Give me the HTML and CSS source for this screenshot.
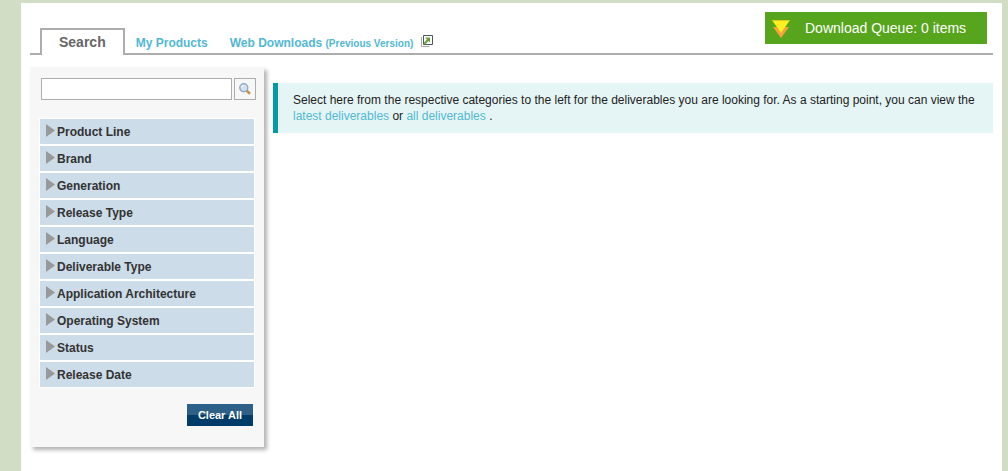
FILE: index.html
```html
<!DOCTYPE html>
<html lang="en">
<head>
<meta charset="utf-8">
<title>Search deliverables</title>
<link rel="stylesheet" href="styles.css">
</head>
<body>
<div class="page">
  <header class="header">
    <nav class="tabs">
      <a class="tab tab-active" href="#">Search</a>
      <a class="tab" href="#">My Products</a>
      <a class="tab" href="#">Web Downloads <small class="tab-note">(Previous Version)</small>
        <svg class="external" width="12" height="12" viewBox="0 0 12 12" aria-hidden="true">
          <path d="M.5 2v9.500h8" fill="none" stroke="#a3a9ad"/>
          <path d="M2.500.5h9v9h-9z" fill="#fff" stroke="#4b5560"/>
          <path d="M4 2.500h5v5L7.500 6 4 9.500 2.500 8 6 4.500z" fill="#6a9e3a"/>
        </svg>
      </a>
    </nav>
    <button class="queue" type="button">
      <svg class="queue-icon" width="18" height="20" viewBox="0 0 18 20" aria-hidden="true">
        <path d="M1 9h16L9 20z" fill="#f7a33a"/>
        <path d="M0 2h18L9 15z" fill="#ffef20"/>
        <path d="M0 2.500h18" stroke="#d5c91c"/>
      </svg>
      <span>Download Queue: 0 items</span>
    </button>
  </header>
  <div class="columns">
    <aside class="sidebar">
      <form class="search">
        <input class="search-input" type="text" aria-label="Search">
        <button class="search-button" type="button" aria-label="Run search">
          <svg width="12" height="12" viewBox="0 0 12 12" aria-hidden="true">
            <path d="M7.500 7.500l3.500 3.300" stroke="#c99343" stroke-width="2.600"/>
            <circle cx="4.800" cy="4.700" r="4" fill="#d3e2f2" stroke="#91a8c8" stroke-width="1.400"/>
            <path d="M2.800 4.200c.2-1.200 1-1.800 2-1.800" fill="none" stroke="#fff"/>
          </svg>
        </button>
      </form>
      <div class="filters">
        <button class="filter" type="button">Product Line</button>
        <button class="filter" type="button">Brand</button>
        <button class="filter" type="button">Generation</button>
        <button class="filter" type="button">Release Type</button>
        <button class="filter" type="button">Language</button>
        <button class="filter" type="button">Deliverable Type</button>
        <button class="filter" type="button">Application Architecture</button>
        <button class="filter" type="button">Operating System</button>
        <button class="filter" type="button">Status</button>
        <button class="filter" type="button">Release Date</button>
      </div>
      <button class="clear" type="button">Clear All</button>
    </aside>
    <main class="main">
      <p class="notice">Select here from the respective categories to the left for the deliverables you are looking for. As a starting point, you can view the <a href="#">latest deliverables</a> or <a href="#">all deliverables</a> .</p>
    </main>
  </div>
</div>
</body>
</html>
```
FILE: styles.css
```css
* {
  box-sizing: border-box;
}

body {
  margin: 0;
  padding: 3px 6px 0 21px;
  background: #d1dec5;
  color: #222;
  font: 12px/16px "Liberation Sans", Arial, sans-serif;
}

button {
  margin: 0;
  border: 0;
  padding: 0;
  font: inherit;
}

a {
  color: #52b8d3;
  text-decoration: none;
}

.page {
  min-height: calc(100vh - 3px);
  padding: 9px 9px 16px;
  background: #fff;
}

.header {
  display: flex;
  justify-content: space-between;
  align-items: flex-end;
  border-bottom: 2px solid #adadad;
}

.tabs {
  display: flex;
  align-items: flex-end;
  padding-left: 10px;
}

.tab {
  margin-right: 22px;
  padding-bottom: 2px;
  font-weight: bold;
}

.tab-active {
  margin: 0 11px -2px 0;
  border: 2px solid #adadad;
  border-bottom: 0;
  padding: 4px 17px 5px;
  background: #fff;
  color: #666;
  font-size: 14px;
}

.tab-note {
  font-size: 10px;
  line-height: 1;
}

.external {
  margin-left: 4px;
  vertical-align: 0;
}

.queue {
  display: flex;
  align-items: center;
  gap: 15px;
  width: 222px;
  height: 32px;
  margin: 0 6px 9px 0;
  padding-left: 7px;
  background: #56a51c;
  color: #fff;
  font-size: 14px;
}

.columns {
  display: flex;
  align-items: flex-start;
  gap: 9px;
  padding-top: 12px;
}

.sidebar {
  display: flex;
  flex-direction: column;
  flex: none;
  width: 234px;
  padding: 11px 9px 21px;
  background: #f7f7f7;
  box-shadow: 3px 3px 4px rgba(0, 0, 0, 0.3);
}

.search {
  display: flex;
  gap: 2px;
  margin-right: -1px;
  padding-left: 2px;
}

.search-input {
  flex: 1;
  min-width: 0;
  height: 22px;
  border: 1px solid #adadad;
  padding: 0 4px;
  background: #fff;
  font: inherit;
}

.search-button {
  display: flex;
  align-items: center;
  justify-content: center;
  width: 22px;
  height: 22px;
  border: 1px solid #adadad;
  background: #f7f7f7;
}

.filters {
  display: flex;
  flex-direction: column;
  gap: 2px;
  margin: 18px 0 16px;
  border: 1px solid #fff;
  background: #fff;
}

.filter {
  display: flex;
  align-items: center;
  gap: 2px;
  height: 25px;
  padding-left: 6px;
  background: #ccdce8;
  color: #333;
  font-weight: bold;
}

.filter::before {
  content: "";
  width: 9px;
  height: 13px;
  margin-bottom: 2px;
  background: #999;
  clip-path: polygon(0 0, 100% 50%, 0 100%);
}

.clear {
  align-self: flex-end;
  width: 66px;
  height: 22px;
  margin-right: 2px;
  background: linear-gradient(#2d5f87 50%, #003c69 50%);
  color: #fff;
  font-size: 11px;
  font-weight: bold;
}

.main {
  flex: 1;
  padding-top: 16px;
}

.notice {
  margin: 0;
  border-left: 5px solid #009ba5;
  padding: 9px 6px 9px 15px;
  background: #e5f5f5;
}
```
